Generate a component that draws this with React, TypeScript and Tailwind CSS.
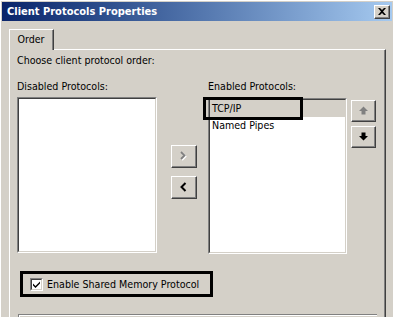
import type { ReactNode } from 'react';

function Button3D({ w, h, children }: { w: string; h: string; children: ReactNode }) {
  return (
    <div className={`${w} ${h} border-t border-l border-white border-r border-b border-r-[#404040] border-b-[#404040] bg-[#d4d0c8]`}>
      <div className="w-full h-full border-r border-b border-[#808080] flex items-center justify-center">
        {children}
      </div>
    </div>
  );
}

function ListBox({ children }: { children?: ReactNode }) {
  return (
    <div className="w-full h-[156px] border-t border-l border-[#808080] border-r border-b border-r-white border-b-white">
      <div className="w-full h-full border-t border-l border-[#404040] border-r border-b border-r-[#d4d0c8] border-b-[#d4d0c8] bg-white">
        {children}
      </div>
    </div>
  );
}

export default function App() {
  return (
    <div className="w-[393px] h-[317px] overflow-hidden bg-[#d4d0c8] font-['DejaVu_Sans_Condensed','Liberation_Sans',Arial,sans-serif] text-[10.6px] text-black">
      <div className="h-full flex flex-col border-t border-l border-white pt-[1px] pl-[1px] pr-[1px]">
        {/* Title bar */}
        <div className="h-[19px] shrink-0 flex items-center justify-between pl-[5px] pr-[2px] bg-linear-to-r from-[#0a246a] to-[#a6caf0]">
          <span className="text-white font-bold text-[11px] leading-[13px]">Client Protocols Properties</span>
          <Button3D w="w-[16px]" h="h-[14px]">
            <svg width="8" height="7" viewBox="0 0 8 7">
              <path d="M0 0h2l2 2 2-2h2L5 3.5 8 7H6L4 5 2 7H0l3-3.5z" fill="#000" />
            </svg>
          </Button3D>
        </div>

        {/* Tabs */}
        <div className="mt-[8px] ml-[7px] flex shrink-0 relative z-10 -mb-[1px]">
          <div className="w-[45px] h-[21px] bg-[#d4d0c8] border-t border-l border-white border-r border-r-[#404040]">
            <div className="w-full h-full border-r border-[#808080] flex justify-center pt-[3px] leading-[13px]">
              Order
            </div>
          </div>
        </div>

        {/* Panel */}
        <div className="ml-[7px] w-[377px] flex-1 border-t border-l border-white border-r border-r-[#404040]">
          <div className="h-full border-r border-[#808080] pl-[7px] pt-[4px] flex flex-col">
            <div className="leading-[13px]">Choose client protocol order:</div>

            <div className="mt-[13px] flex items-start">
              {/* Disabled */}
              <div className="w-[140px] flex flex-col">
                <div className="leading-[13px]">Disabled Protocols:</div>
                <div className="mt-[4px]">
                  <ListBox />
                </div>
              </div>

              {/* Move buttons */}
              <div className="ml-[14px] mt-[65px] flex flex-col gap-[8px]">
                <Button3D w="w-[26px]" h="h-[23px]">
                  <svg width="7" height="10" viewBox="0 0 7 10">
                    <polyline points="2,2 5.5,5.5 2,9" fill="none" stroke="#fff" strokeWidth="1.8" />
                    <polyline points="1,1 4.5,4.5 1,8" fill="none" stroke="#808080" strokeWidth="1.8" />
                  </svg>
                </Button3D>
                <Button3D w="w-[26px]" h="h-[23px]">
                  <svg width="7" height="10" viewBox="0 0 7 10">
                    <polyline points="5.5,1 1.5,5 5.5,9" fill="none" stroke="#000" strokeWidth="2" />
                  </svg>
                </Button3D>
              </div>

              {/* Enabled */}
              <div className="ml-[11px] w-[139px] flex flex-col">
                <div className="leading-[13px]">Enabled Protocols:</div>
                <div className="mt-[5px] relative">
                  <ListBox>
                    <div className="h-[17px] bg-[#d4d0c8] pl-[2px] flex items-center leading-[13px]">TCP/IP</div>
                    <div className="h-[17px] pl-[2px] flex items-center leading-[13px]">Named Pipes</div>
                  </ListBox>
                  <div className="absolute left-[-5px] top-[-1px] w-[100px] h-[23px] border-[3px] border-black" />
                </div>
              </div>

              {/* Up / down */}
              <div className="ml-[4px] mt-[20px] flex flex-col gap-[4px]">
                <Button3D w="w-[25px]" h="h-[22px]">
                  <svg width="9" height="9" viewBox="0 0 9 9">
                    <path d="M4.5 0.5 9 5H6.5V8.5H2.5V5H0z" fill="#808080" />
                  </svg>
                </Button3D>
                <Button3D w="w-[25px]" h="h-[22px]">
                  <svg width="9" height="9" viewBox="0 0 9 9">
                    <path d="M2.5 0.5h4V4H9L4.5 8.5 0 4h2.5z" fill="#000" />
                  </svg>
                </Button3D>
              </div>
            </div>

            {/* Shared memory checkbox */}
            <div className="mt-[17px] ml-[3px] w-[193px] h-[26px] border-[3px] border-black flex items-center pl-[7px]">
              <div className="w-[13px] h-[13px] border-t border-l border-[#808080] border-r border-b border-r-white border-b-white">
                <div className="w-full h-full border-t border-l border-[#404040] border-r border-b border-r-[#d4d0c8] border-b-[#d4d0c8] bg-white flex items-center justify-center">
                  <svg width="7" height="7" viewBox="0 0 7 7">
                    <path d="M0 2.5 2.5 5 7 0.5V2.5L2.5 7 0 4.5z" fill="#000" />
                  </svg>
                </div>
              </div>
              <span className="ml-[4px] leading-[13px]">Enable Shared Memory Protocol</span>
            </div>

            {/* Group box (cut off) */}
            <div className="mt-[17px] ml-[1px] w-[359px] h-[20px] border-t border-l border-[#808080]">
              <div className="w-full h-full border-t border-l border-white" />
            </div>
          </div>
        </div>
      </div>
    </div>
  );
}
